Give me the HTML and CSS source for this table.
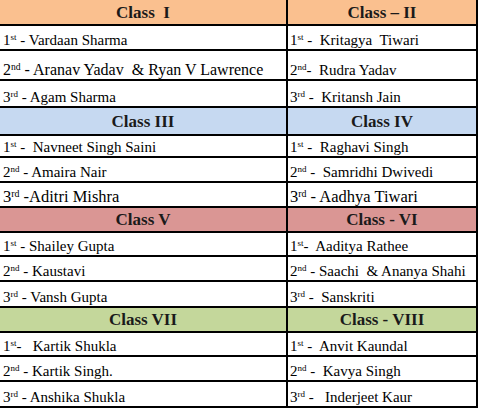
FILE: index.html
```html
<!DOCTYPE html>
<html>
<head>
<meta charset="utf-8">
<link rel="stylesheet" href="styles.css">
</head>
<body>
<div class="sheet">
  <div class="row head peach h26"><div class="cell"><span>Class  I</span></div><div class="cell"><span>Class – II</span></div></div>
  <div class="row h25"><div class="cell"><span>1<sup>st</sup> - Vardaan Sharma</span></div><div class="cell"><span>1<sup>st</sup> -  Kritagya  Tiwari</span></div></div>
  <div class="row h30"><div class="cell big16"><span>2<sup>nd</sup> - Aranav Yadav  &amp; Ryan V Lawrence</span></div><div class="cell"><span>2<sup>nd</sup>-  Rudra Yadav</span></div></div>
  <div class="row h27"><div class="cell"><span>3<sup>rd</sup> - Agam Sharma</span></div><div class="cell"><span>3<sup>rd</sup> -  Kritansh Jain</span></div></div>

  <div class="row head blue h28"><div class="cell"><span>Class III</span></div><div class="cell"><span>Class IV</span></div></div>
  <div class="row h22"><div class="cell"><span>1<sup>st</sup> -  Navneet Singh Saini</span></div><div class="cell"><span>1<sup>st</sup> -  Raghavi Singh</span></div></div>
  <div class="row h25"><div class="cell"><span>2<sup>nd</sup> - Amaira Nair</span></div><div class="cell"><span>2<sup>nd</sup> -  Samridhi Dwivedi</span></div></div>
  <div class="row h25"><div class="cell big17"><span>3<sup>rd</sup> -Aditri Mishra</span></div><div class="cell big17"><span>3<sup>rd</sup> - Aadhya Tiwari</span></div></div>

  <div class="row head pink h25"><div class="cell"><span>Class V</span></div><div class="cell"><span>Class - VI</span></div></div>
  <div class="row h24"><div class="cell"><span>1<sup>st</sup> - Shailey Gupta</span></div><div class="cell"><span>1<sup>st</sup>-  Aaditya Rathee</span></div></div>
  <div class="row h25"><div class="cell"><span>2<sup>nd</sup> - Kaustavi</span></div><div class="cell"><span>2<sup>nd</sup> - Saachi  &amp; Ananya Shahi</span></div></div>
  <div class="row h26"><div class="cell"><span>3<sup>rd</sup> - Vansh Gupta</span></div><div class="cell"><span>3<sup>rd</sup> -  Sanskriti</span></div></div>

  <div class="row head green h25"><div class="cell"><span>Class VII</span></div><div class="cell"><span>Class - VIII</span></div></div>
  <div class="row h24"><div class="cell"><span>1<sup>st</sup>-   Kartik Shukla</span></div><div class="cell"><span>1<sup>st</sup> -  Anvit Kaundal</span></div></div>
  <div class="row h25"><div class="cell"><span>2<sup>nd</sup> - Kartik Singh.</span></div><div class="cell"><span>2<sup>nd</sup> -  Kavya Singh</span></div></div>
  <div class="row h26"><div class="cell"><span>3<sup>rd</sup> - Anshika Shukla</span></div><div class="cell"><span>3<sup>rd</sup> -   Inderjeet Kaur</span></div></div>
</div>
</body>
</html>
```
FILE: styles.css
```css
* { box-sizing: border-box; }
html, body { margin: 0; padding: 0; background: #fff; }
.sheet {
  width: 478px;
  height: 408px;
  border-right: 2px solid #000;
  font-family: "Liberation Serif", "Times New Roman", serif;
  color: #000;
}
.row {
  display: grid;
  grid-template-columns: 288px 1fr;
  border-bottom: 2px solid #000;
}
.cell {
  display: flex;
  align-items: flex-end;
  padding: 0 0 1px 3px;
  font-size: 15px;
  line-height: 1;
  white-space: pre;
  overflow: hidden;
}
.cell:first-child { border-right: 2px solid #000; }
.cell + .cell { padding-left: 2px; }
.cell sup {
  font-size: 0.6em;
  line-height: 0;
  vertical-align: 0.55em;
}
.big16 { font-size: 16px; }
.big17 { font-size: 16.5px; }
.head .cell {
  justify-content: center;
  align-items: center;
  font-weight: bold;
  font-size: 17px;
  padding: 0;
  color: #1a1a1a;
}
.peach { background: #fac08f; }
.blue { background: #c6d9f1; }
.pink { background: #da9694; }
.green { background: #c4d79b; }
.h22 { height: 22px; }
.h24 { height: 24px; }
.h25 { height: 25px; }
.h26 { height: 26px; }
.h27 { height: 27px; }
.h28 { height: 28px; }
.h30 { height: 30px; }
```
